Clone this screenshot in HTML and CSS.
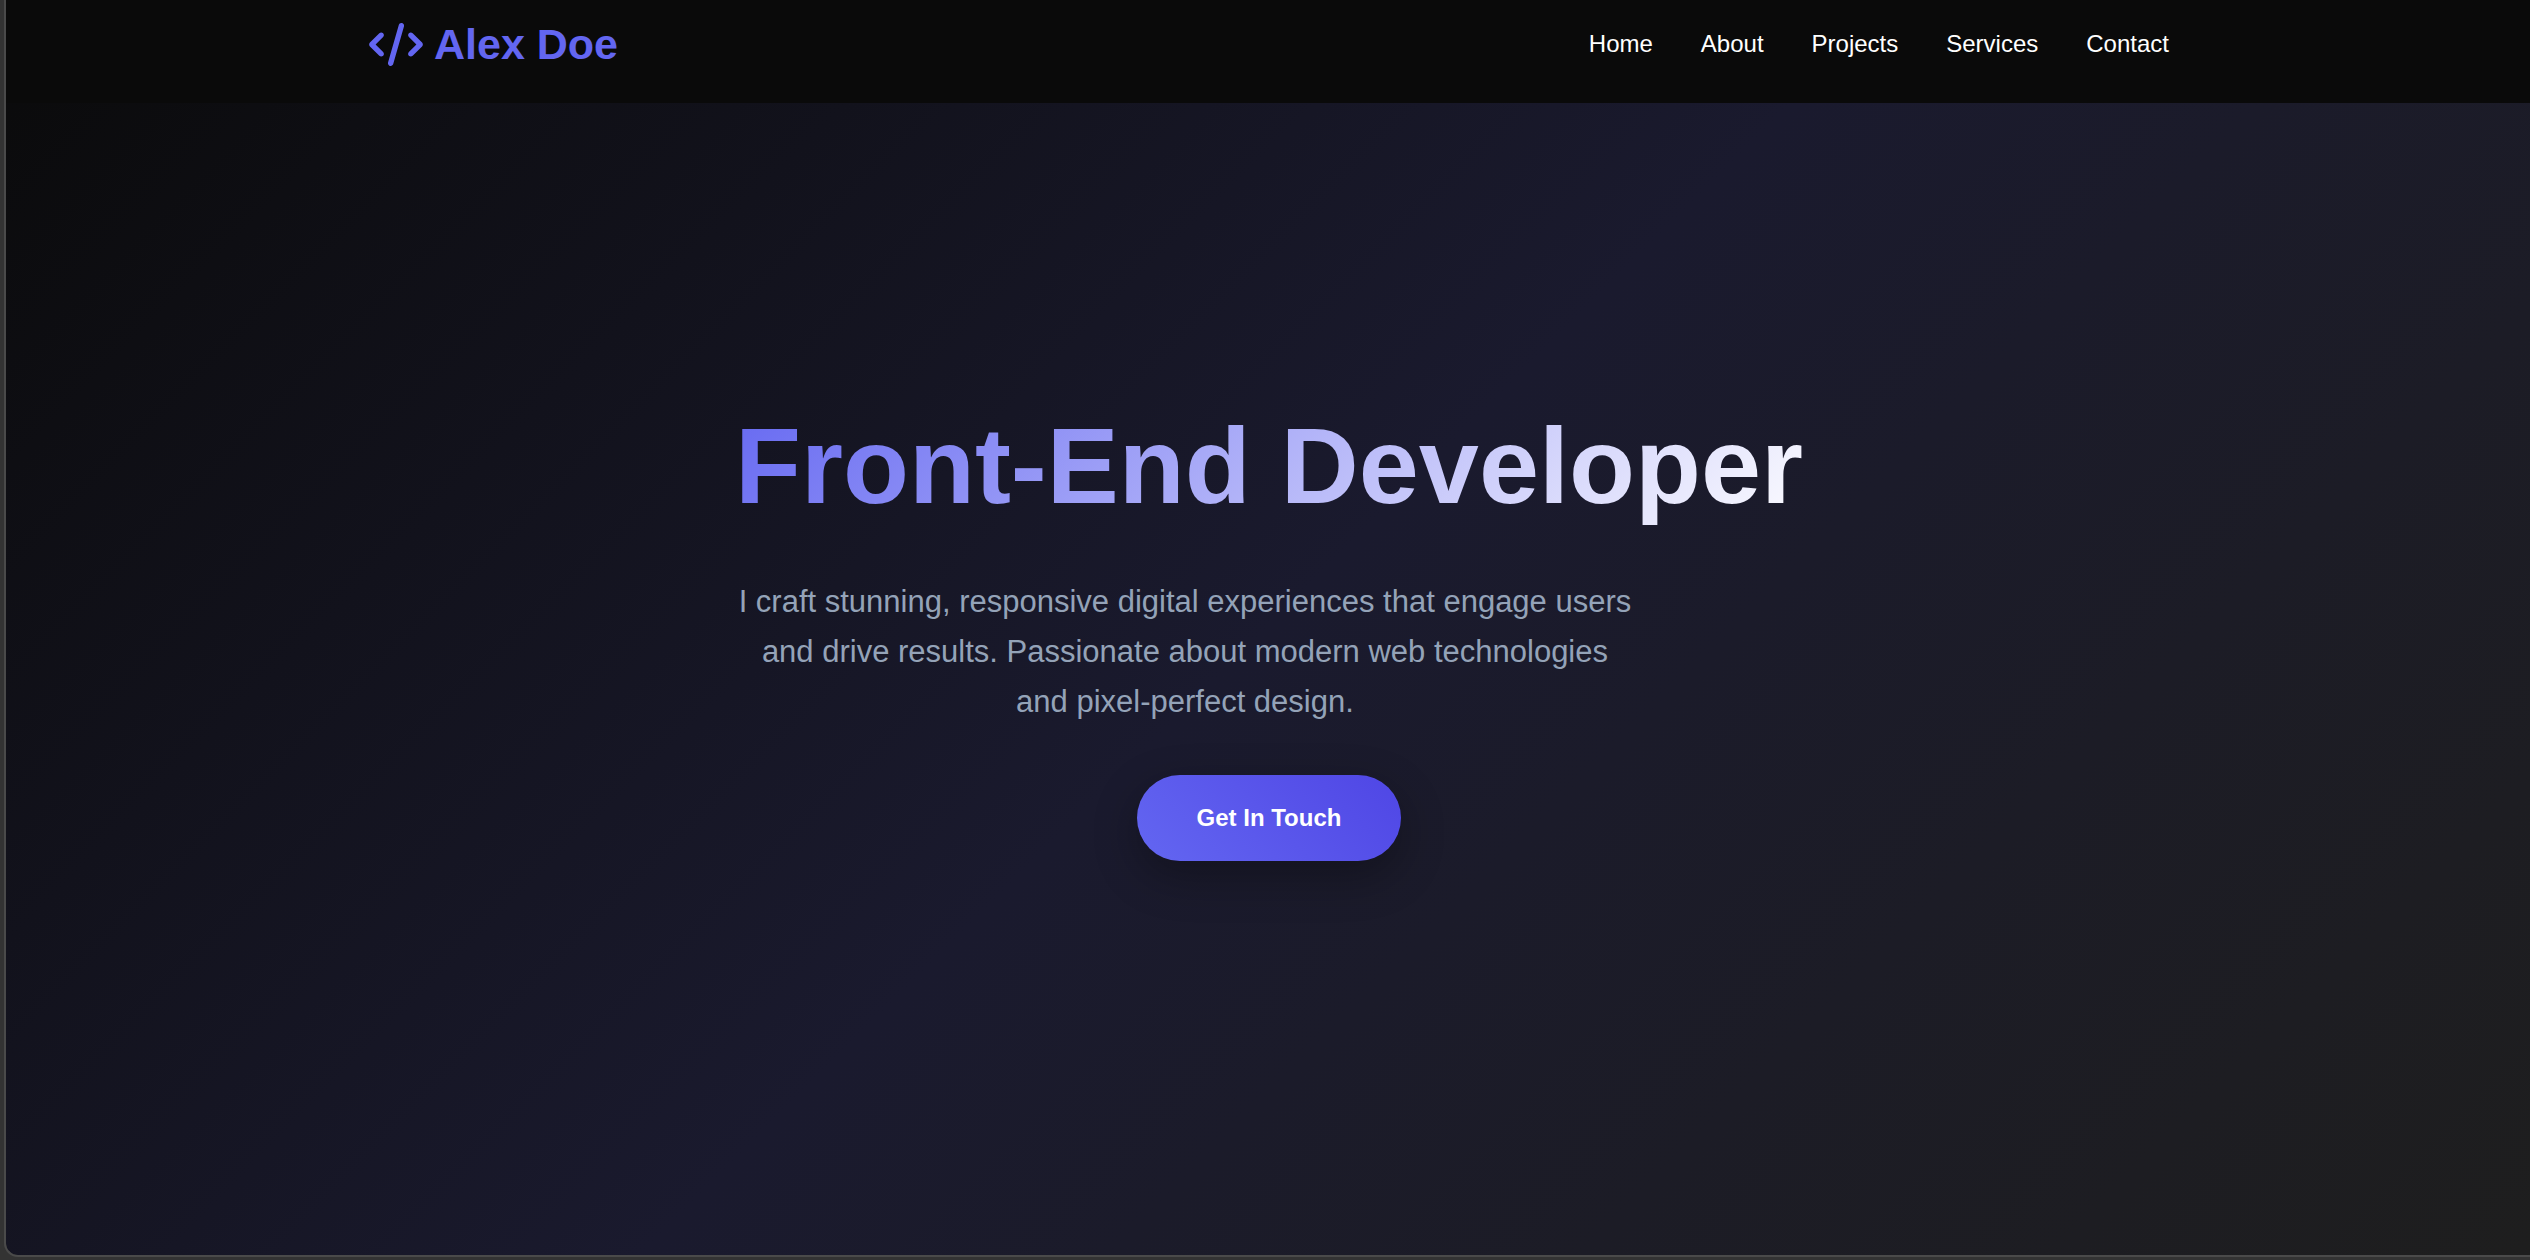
FILE: index.html
```html
<!DOCTYPE html>
<html lang="en">
<head>
  <meta charset="utf-8">
  <meta name="viewport" content="width=device-width, initial-scale=1">
  <title>Alex Doe | Front-End Developer</title>
  <link rel="stylesheet" href="styles.css">
</head>
<body>
  <div class="page">
    <header class="header">
      <div class="container">
        <a class="logo" href="#home">
          <svg class="logo-icon" viewBox="0 0 640 512" aria-hidden="true"><path fill="currentColor" d="M392.800 1.200c-17-4.900-34.700 5-39.600 22l-128 448c-4.900 17 5 34.700 22 39.600s34.700-5 39.600-22l128-448c4.900-17-5-34.700-22-39.600zm80.600 120.100c-12.500 12.500-12.500 32.800 0 45.300L562.700 256l-89.400 89.400c-12.500 12.500-12.500 32.800 0 45.300s32.800 12.500 45.300 0l112-112c12.500-12.500 12.500-32.800 0-45.300l-112-112c-12.500-12.500-32.800-12.500-45.300 0zm-306.700 0c-12.500-12.500-32.800-12.500-45.300 0l-112 112c-12.500 12.500-12.500 32.800 0 45.300l112 112c12.500 12.500 32.800 12.500 45.300 0s12.500-32.800 0-45.300L77.300 256l89.400-89.400c12.500-12.500 12.500-32.800 0-45.300z"/></svg>
          Alex Doe
        </a>
        <nav class="nav">
          <a href="#home">Home</a>
          <a href="#about">About</a>
          <a href="#projects">Projects</a>
          <a href="#services">Services</a>
          <a href="#contact">Contact</a>
        </nav>
      </div>
    </header>
    <main class="hero" id="home">
      <div class="hero-content">
        <h1 class="hero-title">Front-End Developer</h1>
        <p class="hero-text">I craft stunning, responsive digital experiences that engage users and drive results. Passionate about modern web technologies and pixel-perfect design.</p>
        <a class="cta" href="#contact">Get In Touch</a>
      </div>
    </main>
  </div>
</body>
</html>
```

FILE: styles.css
```css
* {
  box-sizing: border-box;
  margin: 0;
  padding: 0;
}

body {
  background: #333333;
  color: #ffffff;
  font-family: "Liberation Sans", Arial, sans-serif;
  font-size: 24px;
  line-height: 38px;
}

a {
  color: inherit;
  text-decoration: none;
}

.page {
  display: flex;
  flex-direction: column;
  min-height: calc(100vh - 3px);
  margin: 0 0 3px 4px;
  border: solid #4a4a4a;
  border-width: 0 0 2px 2px;
  border-bottom-left-radius: 14px;
  background: linear-gradient(135deg, #0a0a0a 0%, #1a1a2e 50%, #1e1e1e 100%) padding-box;
  overflow: hidden;
}

.header {
  padding: 9px 24px 24px 26px;
  background: #0a0a0a;
}

.container {
  display: flex;
  align-items: center;
  justify-content: space-between;
  max-width: 1800px;
  margin: 0 auto;
}

.logo {
  display: flex;
  align-items: center;
  gap: 11px;
  color: #6366f1;
  font-size: 43px;
  font-weight: 700;
  line-height: 70px;
}

.logo-icon {
  width: 54px;
  height: 43px;
}

.nav {
  display: flex;
  gap: 48px;
}

.hero {
  flex: 1;
  display: flex;
  align-items: center;
  justify-content: center;
  padding: 0 24px 118px 26px;
}

.hero-content {
  text-align: center;
}

.hero-title {
  margin-bottom: 25px;
  background: linear-gradient(135deg, #6366f1, #ffffff);
  background-clip: text;
  -webkit-background-clip: text;
  color: transparent;
  font-size: 108px;
  line-height: 172px;
}

.hero-text {
  max-width: 900px;
  margin-bottom: 48px;
  color: #94a3b8;
  font-size: 31px;
  line-height: 50px;
}

.cta {
  display: inline-block;
  padding: 24px 60px;
  border-radius: 50px;
  background: linear-gradient(45deg, #6366f1, #4f46e5);
  box-shadow: 0 15px 45px rgba(0, 0, 0, 0.3);
  font-weight: 700;
  vertical-align: top;
}
```
